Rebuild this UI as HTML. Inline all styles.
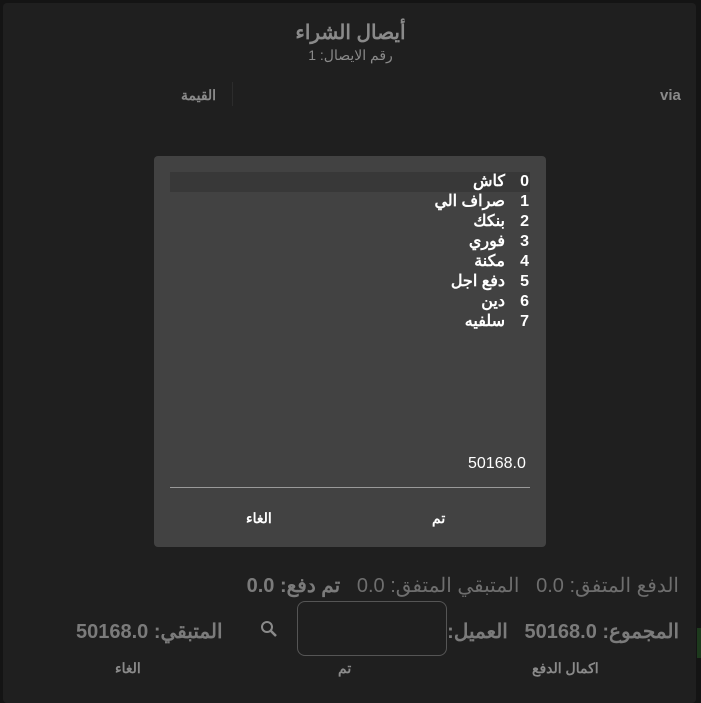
<!DOCTYPE html>
<html><head><meta charset="utf-8"><style>
*{margin:0;padding:0;box-sizing:border-box}
body{width:701px;height:698px;background:#141414;font-family:"Liberation Sans","Noto Sans CJK SC",sans-serif;position:relative;overflow:hidden}
.a{position:absolute;white-space:nowrap}
#dlg{position:absolute;left:3px;top:3px;width:693px;height:700px;background:#1f1f1f;border-radius:4px}
#pop{position:absolute;left:154px;top:156px;width:392px;height:391px;background:#424242;border-radius:4px}
.g{color:#7b7b7b;font-weight:bold;font-size:20px}
.r{color:#fff;font-weight:bold;font-size:16px}
</style></head><body>
<div class="a" style="left:697px;top:628px;width:4px;height:30px;background:#1d3a1d"></div>
<div id="dlg"></div>
<div class="a" style="left:0;width:701px;top:20px;text-align:center;color:#8a8a8a;font-weight:bold;font-size:20px">أيصال الشراء</div>
<div class="a" style="left:0;width:701px;top:47px;text-align:center;color:#8a8a8a;font-size:14px">رقم الايصال: 1</div>
<div class="a" style="left:660px;top:87px;color:#8a8a8a;font-weight:bold;font-size:15px">via</div>
<div class="a" style="left:181px;top:87px;color:#8a8a8a;font-weight:bold;font-size:14px">القيمة</div>
<div class="a" style="left:232px;top:82px;width:1px;height:24px;background:#2c2c2c"></div>
<div id="pop"></div>
<div class="a" style="left:170px;top:172px;width:360px;height:20px;background:#383838"></div>
<div class="a" style="left:170px;top:172px;width:360px;direction:rtl">
<div style="line-height:20px" class="r"><span style="display:inline-block;width:25px;padding-right:1px">0</span>كاش</div>
<div style="line-height:20px" class="r"><span style="display:inline-block;width:25px;padding-right:1px">1</span>صراف الي</div>
<div style="line-height:20px" class="r"><span style="display:inline-block;width:25px;padding-right:1px">2</span>بنكك</div>
<div style="line-height:20px" class="r"><span style="display:inline-block;width:25px;padding-right:1px">3</span>فوري</div>
<div style="line-height:20px" class="r"><span style="display:inline-block;width:25px;padding-right:1px">4</span>مكنة</div>
<div style="line-height:20px" class="r"><span style="display:inline-block;width:25px;padding-right:1px">5</span>دفع اجل</div>
<div style="line-height:20px" class="r"><span style="display:inline-block;width:25px;padding-right:1px">6</span>دين</div>
<div style="line-height:20px" class="r"><span style="display:inline-block;width:25px;padding-right:1px">7</span>سلفيه</div>
</div>
<div class="a" style="left:468px;top:455px;color:#fff;font-size:16px">50168.0</div>
<div class="a" style="left:170px;top:487px;width:360px;height:1px;background:#9a9a9a"></div>
<div class="a r" style="left:246px;top:510px;font-size:14px">الغاء</div>
<div class="a r" style="left:432px;top:510px;font-size:14px">تم</div>
<div class="a" style="right:22px;top:573px;direction:rtl;color:#6e6e6e;font-size:20px">الدفع المتفق: 0.0&nbsp;&nbsp;&nbsp;المتبقي المتفق: 0.0&nbsp;&nbsp;&nbsp;<b style="color:#7b7b7b">تم دفع: 0.0</b></div>
<div class="a g" style="right:22px;top:619px;direction:rtl">المجموع: 50168.0&nbsp;&nbsp;&nbsp;العميل:</div>
<div class="a" style="left:297px;top:601px;width:150px;height:55px;border:1px solid #555;border-radius:8px"></div>
<svg class="a" style="left:259px;top:619px" width="20" height="20" viewBox="0 0 20 20"><circle cx="8" cy="8" r="5" stroke="#8a8a8a" stroke-width="2" fill="none"/><path d="M11.5 11.5L17 17" stroke="#8a8a8a" stroke-width="2.5"/></svg>
<div class="a g" style="left:76px;top:619px;direction:rtl">المتبقي: 50168.0</div>
<div class="a" style="left:532px;top:660px;color:#8a8a8a;font-weight:bold;font-size:14px">اكمال الدفع</div>
<div class="a" style="left:338px;top:660px;color:#8a8a8a;font-weight:bold;font-size:14px">تم</div>
<div class="a" style="left:115px;top:660px;color:#8a8a8a;font-weight:bold;font-size:14px">الغاء</div>
</body></html>
